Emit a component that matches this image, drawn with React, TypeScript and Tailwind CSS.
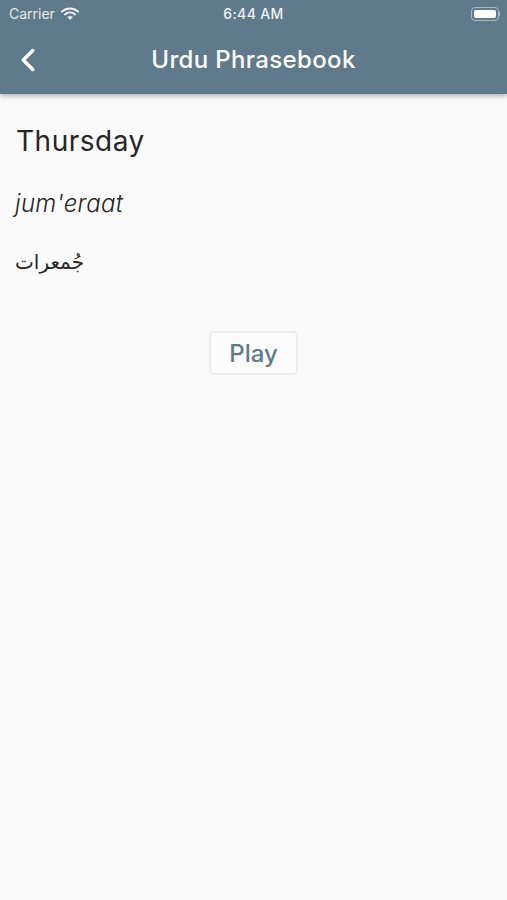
import React from 'react';
import { ChevronLeft } from 'lucide-react';

const sans = "font-['Inter','Roboto',sans-serif]";

const Wifi = () => (
  <svg width="18" height="13" viewBox="0 0 18 13" fill="none" stroke="#eef2f4" strokeLinecap="round">
    <path d="M1 4.6C5.6.4 12.4.4 17 4.6" strokeWidth="2" />
    <path d="M3.9 7.4c3-2.6 7.2-2.6 10.2 0" strokeWidth="2" />
    <path d="M9 12.4 6.6 9.9c1.4-1 3.4-1 4.8 0z" fill="#eef2f4" strokeWidth="0.5" />
  </svg>
);

const Battery = () => (
  <div className="flex items-center">
    <div className="w-[28px] h-[14px] rounded-[4px] border border-[#a9b8c2] p-[2px]">
      <div className="w-full h-full rounded-[2px] bg-white" />
    </div>
    <div className="w-[1px] h-[4px] bg-[#a9b8c2]" />
  </div>
);

export default function App() {
  return (
    <div className={`min-h-[900px] bg-[#fafafa] ${sans}`}>
      <header className="h-[94px] bg-[#5f7a8b] shadow-[0_2px_5px_rgba(0,0,0,0.3)] text-white">
        <div className="h-[27px] pl-[9px] pr-[7px] flex items-center justify-between relative">
          <div className="flex items-center gap-[6px] text-[14px] text-[#e6ebee]">
            <span>Carrier</span>
            <Wifi />
          </div>
          <span className="absolute left-0 right-0 text-center text-[14px] tracking-[0.35px] font-medium text-[#eef2f4]">6:44 AM</span>
          <Battery />
        </div>
        <div className="h-[67px] flex items-center pb-[2px] relative">
          <ChevronLeft size={38} strokeWidth={2.2} className="ml-[9px]" />
          <h1 className="absolute left-0 right-0 text-center text-[24px] tracking-[0.35px] font-medium leading-none">Urdu Phrasebook</h1>
        </div>
      </header>

      <main className="pt-[30px] px-[16px] text-[#262626]">
        <p className="text-[28px] leading-[34px] tracking-[0.5px]">Thursday</p>
        <p className="mt-[31px] -ml-[1px] text-[24px] leading-[29px] tracking-[0.3px] italic font-light">jum'eraat</p>
        <p dir="rtl" className="mt-[28px] text-[20px] leading-[32px] text-left font-['DejaVu_Sans',sans-serif] w-fit -ml-[1px]">جُمعرات</p>
        <div className="mt-[53px] flex justify-center">
          <button className="w-[89px] h-[44px] rounded-[5px] border-2 border-[#eeeeee] bg-[#fcfcfc] text-[24px] font-medium text-[#5f7a8b] pt-[1px]">
            Play
          </button>
        </div>
      </main>
    </div>
  );
}
